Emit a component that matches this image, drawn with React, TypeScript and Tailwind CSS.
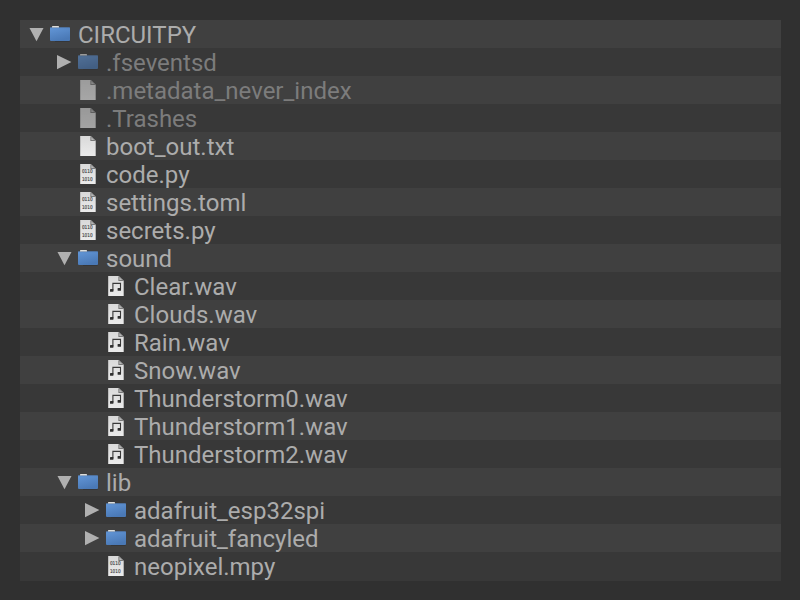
type Kind = 'folder' | 'blank' | 'binary' | 'audio';

interface Entry {
  name: string;
  kind: Kind;
  depth: 0 | 1 | 2;
  open?: boolean;
  hidden?: boolean;
}

const entries: Entry[] = [
  { name: 'CIRCUITPY', kind: 'folder', depth: 0, open: true },
  { name: '.fseventsd', kind: 'folder', depth: 1, hidden: true },
  { name: '.metadata_never_index', kind: 'blank', depth: 1, hidden: true },
  { name: '.Trashes', kind: 'blank', depth: 1, hidden: true },
  { name: 'boot_out.txt', kind: 'blank', depth: 1 },
  { name: 'code.py', kind: 'binary', depth: 1 },
  { name: 'settings.toml', kind: 'binary', depth: 1 },
  { name: 'secrets.py', kind: 'binary', depth: 1 },
  { name: 'sound', kind: 'folder', depth: 1, open: true },
  { name: 'Clear.wav', kind: 'audio', depth: 2 },
  { name: 'Clouds.wav', kind: 'audio', depth: 2 },
  { name: 'Rain.wav', kind: 'audio', depth: 2 },
  { name: 'Snow.wav', kind: 'audio', depth: 2 },
  { name: 'Thunderstorm0.wav', kind: 'audio', depth: 2 },
  { name: 'Thunderstorm1.wav', kind: 'audio', depth: 2 },
  { name: 'Thunderstorm2.wav', kind: 'audio', depth: 2 },
  { name: 'lib', kind: 'folder', depth: 1, open: true },
  { name: 'adafruit_esp32spi', kind: 'folder', depth: 2 },
  { name: 'adafruit_fancyled', kind: 'folder', depth: 2 },
  { name: 'neopixel.mpy', kind: 'binary', depth: 2 },
];

const indents = ['pl-2', 'pl-9', 'pl-16'];

function Arrow({ open }: { open?: boolean }) {
  return (
    <svg className="h-7 w-[22px] shrink-0" viewBox="0 0 22 28">
      <path d={open ? 'M1.5 8h14L8.5 21.2z' : 'M1 7v14.2L15.4 14z'} fill="#b0b0b0" />
    </svg>
  );
}

function Folder() {
  return (
    <svg className="h-7 w-5 shrink-0" viewBox="0 0 20 28">
      <defs>
        <linearGradient id="folder" x1="0" y1="0" x2=".4" y2="1">
          <stop offset="0" stopColor="#6397d8" />
          <stop offset="1" stopColor="#4a79b6" />
        </linearGradient>
      </defs>
      <path d="M5 21.2h14.6" stroke="#303235" strokeWidth="1" />
      <rect x="0" y="7.2" width="20" height="13.8" rx="1" fill="url(#folder)" />
      <path d="M.7 7.6h18.6" stroke="#4d6f9b" strokeWidth=".8" />
      <path d="M2 7.6V6.4q0-.5.6-.5h5.8q.6 0 .6.5v1.2z" fill="#dededb" />
    </svg>
  );
}

function Sheet({ kind }: { kind: Kind }) {
  return (
    <svg className="h-7 w-5 shrink-0" viewBox="0 0 20 28">
      <defs>
        <linearGradient id="sheet" x1="0" y1="0" x2="0" y2="1">
          <stop offset="0" stopColor="#d9d9d9" />
          <stop offset="1" stopColor="#ebebeb" />
        </linearGradient>
      </defs>
      <path d="M2.2 4h10.6l4.9 4.8V24H2.2z" fill="url(#sheet)" />
      <path d="M12.4 4v4.9h5.3z" fill="#777777" />
      <path d="M13.3 5.2v2.8h3z" fill="#b8b8b8" />
      {kind === 'binary' && (
        <g
          fill="#404040"
          stroke="#404040"
          strokeWidth=".15"
          fontFamily="'DejaVu Sans', sans-serif"
          fontSize="5.2"
        >
          <text x="3.9" y="12.9" textLength="10.8" lengthAdjust="spacingAndGlyphs">0110</text>
          <text x="3.9" y="20.9" textLength="10.8" lengthAdjust="spacingAndGlyphs">1010</text>
        </g>
      )}
      {kind === 'audio' && (
        <g>
          <path d="M6.9 18.5v-7.1h7.6v6" fill="none" stroke="#383838" strokeWidth="1.1" />
          <rect x="4" y="17" width="3.4" height="2.8" rx=".5" fill="#303030" />
          <rect x="11.6" y="16" width="3.4" height="2.8" rx=".5" fill="#303030" />
        </g>
      )}
    </svg>
  );
}

function Row({ entry }: { entry: Entry }) {
  const folder = entry.kind === 'folder';
  return (
    <li className={`flex h-7 items-center odd:bg-[#404040] even:bg-[#383838] ${indents[entry.depth]}`}>
      {folder ? <Arrow open={entry.open} /> : <span className="w-[22px] shrink-0" />}
      <span className={`flex ${entry.hidden ? 'opacity-60' : ''}`}>
        {folder ? <Folder /> : <Sheet kind={entry.kind} />}
      </span>
      <span
        className={`ml-2 whitespace-nowrap pt-0.5 text-[24px] leading-7 ${
          entry.hidden ? 'text-[#7c7c7c]' : 'text-[#acacac]'
        }`}
      >
        {entry.name}
      </span>
    </li>
  );
}

export default function App() {
  return (
    <main className="h-[600px] w-[800px] bg-[#303030] p-5 font-[Roboto,sans-serif]">
      <ul className="w-[761px] bg-[#383838] pb-px">
        {entries.map((entry) => (
          <Row key={entry.name} entry={entry} />
        ))}
      </ul>
    </main>
  );
}
